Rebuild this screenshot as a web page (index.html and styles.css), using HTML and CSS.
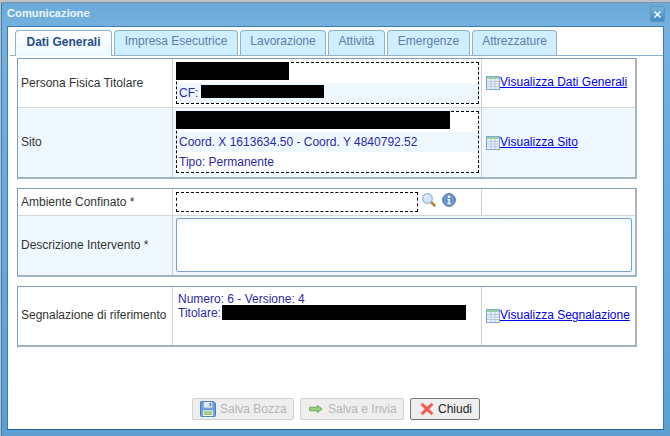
FILE: index.html
```html
<!DOCTYPE html>
<html lang="it">
<head>
<meta charset="utf-8">
<title>Comunicazione</title>
<link rel="stylesheet" href="styles.css">
</head>
<body>
<svg class="defs" width="0" height="0" aria-hidden="true">
  <symbol id="grid" viewBox="0 0 14 14">
    <rect x="0.5" y="0.5" width="13" height="13" fill="#eef3fb" stroke="#7ea6d8"/>
    <rect x="1" y="1" width="12" height="2" fill="#9fcf9a"/>
    <path d="M1 5.500h12M1 8h12M1 10.500h12M5 3v10M9 3v10" stroke="#b4c8e4" fill="none"/>
  </symbol>
</svg>
<div class="window">
  <header class="titlebar">
    <span class="title">Comunicazione</span>
    <button class="close" type="button" aria-label="Chiudi">
      <svg width="7" height="7" viewBox="0 0 7 7"><path d="M.5.5l6 6M6.500.5l-6 6" stroke="#fff" stroke-width="1.4"/></svg>
    </button>
  </header>
  <main class="panel">
    <nav class="tabs">
      <a class="tab tab-active">Dati Generali</a>
      <a class="tab tab-impresa">Impresa Esecutrice</a>
      <a class="tab tab-lav">Lavorazione</a>
      <a class="tab tab-att">Attività</a>
      <a class="tab tab-eme">Emergenze</a>
      <a class="tab tab-attr">Attrezzature</a>
    </nav>
    <div class="forms">
      <section class="sheet">
        <div class="row h48">
          <div class="label">Persona Fisica Titolare</div>
          <div class="value">
            <div class="dashbox">
              <div class="line l-first"><span class="redact w113"></span></div>
              <div class="line l-alt"><span>CF:</span><span class="redact w123 cf"></span></div>
            </div>
          </div>
          <div class="action"><svg class="ico"><use href="#grid"/></svg><a href="#">Visualizza Dati Generali</a></div>
        </div>
        <div class="row row-b h70">
          <div class="label">Sito</div>
          <div class="value">
            <div class="dashbox">
              <div class="line l-first"><span class="redact w274"></span></div>
              <div class="line l-alt">Coord. X 1613634.50 - Coord. Y 4840792.52</div>
              <div class="line">Tipo: Permanente</div>
            </div>
          </div>
          <div class="action"><svg class="ico"><use href="#grid"/></svg><a href="#">Visualizza Sito</a></div>
        </div>
      </section>
      <section class="sheet">
        <div class="row h26">
          <div class="label">Ambiente Confinato *</div>
          <div class="value inline">
            <div class="combo"></div>
            <svg class="search" width="14" height="14" viewBox="0 0 14 14">
              <path d="M8.500 8.500l4 4" stroke="#c0803e" stroke-width="2.600" stroke-linecap="round"/>
              <circle cx="5.500" cy="5.500" r="4.800" fill="#d2e4f7" stroke="#93b6da" stroke-width="1.300"/>
              <path d="M3 5.500a2.500 2.500 0 0 1 2.500-2.500" stroke="#fff" fill="none"/>
            </svg>
            <svg class="info" width="14" height="14" viewBox="0 0 14 14">
              <circle cx="7" cy="7" r="6.400" fill="#6f98c8" stroke="#4f79ad"/>
              <circle cx="7" cy="3.800" r="1.200" fill="#fff"/>
              <path d="M5.600 6h2.200v4.200h1v1H5.400v-1h1V7h-.8z" fill="#fff"/>
            </svg>
          </div>
          <div class="action"></div>
        </div>
        <div class="row row-b h60">
          <div class="label">Descrizione Intervento *</div>
          <div class="value value-wide"><textarea class="area" aria-label="Descrizione Intervento"></textarea></div>
        </div>
      </section>
      <section class="sheet">
        <div class="row h58">
          <div class="label">Segnalazione di riferimento</div>
          <div class="value segn">
            <div class="segn-line">Numero: 6 - Versione: 4</div>
            <div class="segn-line">Titolare:<span class="redact w244"></span></div>
          </div>
          <div class="action"><svg class="ico"><use href="#grid"/></svg><a href="#">Visualizza Segnalazione</a></div>
        </div>
      </section>
    </div>
    <footer class="buttons">
      <button class="btn btn-save" type="button" disabled>
        <svg width="16" height="16" viewBox="0 0 17 17">
          <path d="M.5 1.500a1 1 0 0 1 1-1h13l2 2v13a1 1 0 0 1-1 1h-14a1 1 0 0 1-1-1z" fill="#6f9fd8" stroke="#4a78b5"/>
          <rect x="4" y="1" width="9" height="6" fill="#dfe9f5"/>
          <rect x="10" y="2" width="2" height="3.500" fill="#5f8cc4"/>
          <rect x="3" y="10" width="11" height="6" fill="#eef4ea"/>
          <path d="M4 12h9M4 14h9" stroke="#8cc46e" stroke-width="1.500"/>
        </svg>
        <span>Salva Bozza</span>
      </button>
      <button class="btn btn-send" type="button" disabled>
        <svg width="14" height="10" viewBox="0 0 16 10">
          <path d="M.5 3h9V.8L15 5l-5.500 4.200V7h-9z" fill="#96cf7e" stroke="#6ba850"/>
        </svg>
        <span>Salva e Invia</span>
      </button>
      <button class="btn btn-on" type="button">
        <svg width="14" height="14" viewBox="0 0 15 15">
          <path d="M2.800 1L7.500 5 12.200 1 14.300 3 10 7.500 14.300 12 12.200 14 7.500 10 2.800 14 .7 12 5 7.500 .7 3z" fill="#f2584f" stroke="#eba49e" stroke-width=".8"/>
        </svg>
        <span>Chiudi</span>
      </button>
    </footer>
  </main>
</div>
</body>
</html>
```
FILE: styles.css
```css
* { box-sizing: border-box; }
html, body { margin: 0; padding: 0; }
body {
  width: 670px;
  height: 436px;
  overflow: hidden;
  background: #bcc0c4;
  font-family: "Liberation Sans", Arial, sans-serif;
  font-size: 12px;
  color: #333;
}
.defs { display: block; height: 0; }

.window {
  width: 669px;
  height: 434px;
  margin: 2px 0 0 1px;
  border-top: 1px solid #7d95a8;
  padding: 0 6px 6px 6px;
  display: flex;
  flex-direction: column;
  background: linear-gradient(#69a9d8 0, #76b1de 24px, #5e9fd2 100%);
  box-shadow: inset 1px 0 0 #3f7cb0;
}
.titlebar {
  height: 23px;
  flex: none;
  display: flex;
  align-items: center;
  justify-content: space-between;
}
.title {
  color: #eef6fc;
  font-weight: bold;
  font-size: 11.200px;
  margin-bottom: 3px;
}
.close {
  width: 15px;
  height: 16px;
  padding: 0;
  margin: 0 -1px 1px 0;
  border: 1px solid #5f93bd;
  border-radius: 2px;
  background: linear-gradient(#78b0db, #3f8cc4);
  display: flex;
  align-items: center;
  justify-content: center;
}
.panel {
  flex: 1;
  background: #fff;
  border-top: 1px solid #3f7cb0;
  border-bottom: 1px solid #1f5f9f;
  box-shadow: inset 1px 0 0 #3f7cb0, inset -1px 0 0 #3f7cb0;
  display: flex;
  flex-direction: column;
  min-height: 0;
}
.tabs {
  display: flex;
  gap: 2px;
  height: 26px;
  margin: 3px 1px 0 3px;
  padding-left: 5px;
  border-bottom: 1px solid #8fb3cc;
  flex: none;
}
.tab {
  height: 25px;
  border: 1px solid #8fb3cc;
  border-bottom: 0;
  border-radius: 4px 4px 0 0;
  background: #cfeeff;
  color: #5a7fa8;
  display: flex;
  align-items: center;
  justify-content: center;
  padding-bottom: 4px;
}
.tab-active {
  width: 97px;
  height: 26px;
  font-weight: bold;
  color: #1f4e8c;
  background: linear-gradient(#fff, #eef9ff);
}
.tab-impresa { width: 124px; }
.tab-lav { width: 86px; }
.tab-att { width: 57px; }
.tab-eme { width: 83px; }
.tab-attr { width: 85px; }

.forms {
  display: flex;
  flex-direction: column;
  gap: 9px;
  padding: 2px 0 0 10px;
  flex: none;
}
.sheet {
  width: 620px;
  border-top: 1px solid #7f9fc0;
  border-left: 1px solid #7f9fc0;
  border-right: 2px solid #a9b5c3;
  border-bottom: 2px solid #a3b3c6;
}
.row {
  display: grid;
  grid-template-columns: 155px 309px 1fr;
  border-top: 1px solid #d6d6d6;
}
.row:first-child { border-top: 0; }
.row-b { background: #f0f8ff; }
.h48 { height: 48px; }
.h70 { height: 70px; }
.h26 { height: 26px; }
.h60 { height: 60px; }
.h58 { height: 58px; }
.label {
  display: flex;
  align-items: center;
  padding-left: 3px;
  color: #333;
  border-right: 1px solid #d0d0d0;
}
.row-b .label, .h58 .label { padding-bottom: 2px; }
.value {
  padding: 3px 2px 0 3px;
  border-right: 1px solid #d0d0d0;
  color: #2a2aa5;
}
.value-wide {
  grid-column: 2 / 4;
  border-right: 0;
  padding: 2px 3px 3px 3px;
}
.inline {
  display: flex;
  align-items: flex-start;
  gap: 3px;
}
.dashbox {
  border: 1px dashed #000;
  display: flex;
  flex-direction: column;
  background: #fff;
}
.line {
  height: 20px;
  padding-left: 2px;
  display: flex;
  align-items: center;
  flex: none;
}
.l-first {
  height: 21px;
  margin: -1px 0 0 -1px;
  padding-left: 0;
  align-items: flex-start;
}
.l-alt { background: #f0f8ff; }
.redact { display: inline-block; background: #000; height: 18px; }
.w113 { width: 113px; }
.w123 { width: 123px; height: 13px; margin-bottom: 3px; }
.w274 { width: 274px; }
.w244 { width: 244px; height: 15px; margin-left: 1px; }
.cf { margin-left: 3px; }
.action {
  display: flex;
  align-items: center;
  padding-left: 4px;
}
.action a {
  color: #0000ee;
  text-decoration: underline;
  margin-bottom: 2px;
}
.ico { width: 14px; height: 14px; flex: none; }
.combo {
  width: 242px;
  height: 20px;
  border: 1px dashed #000;
  background: #fff;
}
.search { margin: 1px 0 0 1px; }
.info { margin: 1px 0 0 3px; }
.area {
  display: block;
  width: 456px;
  height: 54px;
  border: 1px solid #7f9fc0;
  border-radius: 2px;
  background: linear-gradient(#eef7fd, #fff 6px);
  resize: none;
  padding: 0;
  margin: 0;
}
.segn {
  padding: 5px 3px 0 5px;
  display: flex;
  flex-direction: column;
  color: #2a2aa5;
}
.segn-line { display: flex; align-items: flex-end; height: 14px; flex: none; }
.buttons {
  margin-top: auto;
  display: flex;
  gap: 6px;
  padding: 0 0 9px 185px;
}
.btn {
  height: 22px;
  padding: 0 0 0 8px;
  display: flex;
  align-items: center;
  gap: 5px;
  border: 1px solid #d0d0d0;
  border-radius: 2px;
  background: #eee;
  color: #b5b5b5;
  font: 12px "Liberation Sans", Arial, sans-serif;
}
.btn-save { width: 102px; padding-left: 7px; gap: 4px; }
.btn-send { width: 104px; }
.btn-on { width: 70px; padding-left: 9px; gap: 4px; border-color: #777; color: #222; }
```
